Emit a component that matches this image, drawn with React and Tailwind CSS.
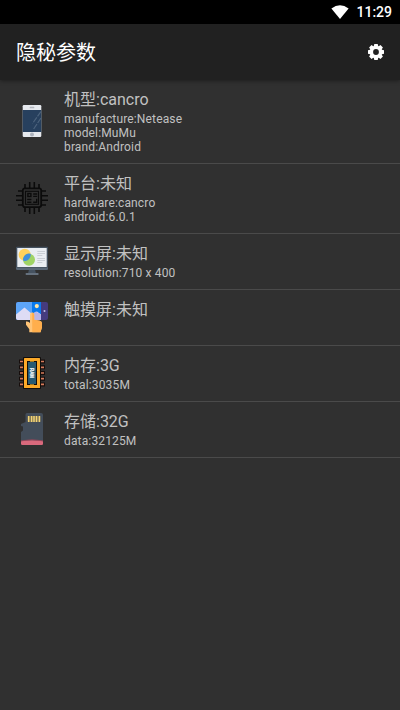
const PhoneIcon = () => (
  <svg viewBox="0 0 32 32" className="block size-8">
    <rect x="6.7" y="0" width="18.6" height="32" rx="1.2" fill="#e6e9ee" />
    <rect x="6.7" y="5" width="18.6" height="22" fill="#27405e" />
    <rect x="13.7" y="1.8" width="4.6" height="1.4" rx="0.5" fill="#b3b7bf" />
    <circle cx="16" cy="29.5" r="2" fill="#adb3bd" />
    <path d="M25 6.5 16.5 18.5M25 13 17.3 24.5" stroke="#4d637d" strokeWidth="1.2" strokeDasharray="6 1.2" />
  </svg>
);

const ChipIcon = () => (
  <svg viewBox="0 0 32 32" className="block size-8" fill="none" stroke="#0b0b0b">
    <path
      d="M9 2v4M13.7 0v6M18.3 0v6M23 2v4M9 26v4M13.7 26v6M18.3 26v6M23 26v4M2 9h4M0 13.7h6M0 18.3h6M2 23h4M26 9h4M26 13.7h6M26 18.3h6M26 23h4"
      strokeWidth="1.6"
    />
    <rect x="6.8" y="6.3" width="18.4" height="18.8" rx="2" strokeWidth="1.8" />
    <rect x="9.5" y="9.3" width="13" height="13" strokeWidth="1.1" />
    <rect x="11.9" y="11.5" width="3" height="3" strokeWidth="1.4" />
    <path d="M17.2 12h4M17.2 14.4h4M11.2 17.5h4.2M11.2 20.3h4.2M17.2 20.3h3.5v-3.6" strokeWidth="1.4" />
  </svg>
);

const MonitorIcon = () => (
  <svg viewBox="0 0 32 32" className="block size-8">
    <path d="M13 23.5h6l1 4h-8z" fill="#455260" />
    <rect x="9.7" y="27" width="12.8" height="2" rx="0.5" fill="#65717e" />
    <path d="M0 20.5h32v2.3q0 1.2-1.2 1.2H1.2Q0 24 0 22.8z" fill="#596776" />
    <rect x="0" y="0.7" width="32" height="21" rx="1" fill="#44515f" />
    <rect x="1.3" y="2" width="29.4" height="19" fill="#e9edf2" />
    <circle cx="8.7" cy="8.8" r="6.1" fill="#ffd15c" />
    <circle cx="13" cy="13.7" r="6" fill="#9fd365" />
    <path d="M7.1 12.4A6 6 0 0 1 14.6 7.8 6.1 6.1 0 0 1 7.3 14.8 6 6 0 0 1 7.1 12.4z" fill="#3f8fdb" />
    <path d="M21.3 5.5H29M21.3 7.5H29M21.3 9.5h5M21.3 12.5H29M21.3 14.5H29M21.3 16.5h5" stroke="#c9ced5" strokeWidth="1.1" />
  </svg>
);

const TouchIcon = () => (
  <svg viewBox="0 0 32 32" className="block size-8">
    <rect x="0" y="0" width="32" height="18" rx="2" fill="#453b7e" />
    <path d="M2 0h23v18H2q-2 0-2-2V2q0-2 2-2z" fill="#5da5f8" />
    <path d="M16 0h9v18h-9z" fill="#0879ed" />
    <path d="M0 12.5 8.5 5.5 16 12l5-2.5 4 3V18H2q-2 0-2-2z" fill="#dedcf5" />
    <path d="M16 12l4-2.5 5 3V18h-9z" fill="#b8b5e8" />
    <circle cx="20.8" cy="4.1" r="2.1" fill="#ffe5a6" />
    <circle cx="28.5" cy="9" r="1" fill="#c2bfe9" />
    <path d="M14 21V12.7a2.1 2.1 0 0 1 4.2 0v5.1l5.6 1q2.2.5 2.2 2.7v3.7l-1.5 5.1H13.3v-3L10 22.8v-3.2q2.7-.5 4 1.4z" fill="#ffc477" />
    <path d="M16.2 10.6a2.1 2.1 0 0 1 2 2.1v5.1l5.6 1q2.2.5 2.2 2.7v3.7l-1.5 5.1h-8.3z" fill="#ffae4c" />
  </svg>
);

const RamIcon = () => (
  <svg viewBox="0 0 32 32" className="block size-8">
    <path d="M3 4.5h26M3 10.3h26M3 16h26M3 21.7h26M3 27.4h26" stroke="#160d0b" strokeWidth="4" />
    <path d="M4 4.5h24M4 10.3h24M4 16h24M4 21.7h24M4 27.4h24" stroke="#d77d5d" strokeWidth="1.7" />
    <rect x="7" y="0" width="18" height="32" rx="1" fill="#110d0b" />
    <rect x="8" y="1" width="16" height="30" rx="0.5" fill="#fba928" />
    <rect x="11" y="4" width="10" height="24" fill="#110d0b" />
    <rect x="12" y="5" width="8" height="22" fill="#285a72" />
    <path d="M14 4.5h4M14 27.5h4" stroke="#9f761f" strokeWidth="1" />
    <text
      x="16"
      y="17.8"
      textAnchor="middle"
      transform="rotate(90 16 16)"
      fill="#edf4f7"
      stroke="#edf4f7"
      strokeWidth="0.3"
      fontFamily="Liberation Sans, sans-serif"
      fontSize="5"
      fontWeight="700"
      textLength="10"
      lengthAdjust="spacingAndGlyphs"
    >
      RAM
    </text>
  </svg>
);

const SdCardIcon = () => (
  <svg viewBox="0 0 32 32" className="block size-8">
    <path d="M11 0h14q2 0 2 2v29H5V19l2-1.5v-4L5 13v-2l4.5-2V1.5Q9.5 0 11 0z" fill="#434d5a" />
    <path d="M5 28.2Q16 26.2 27 28.2v2.6q0 1.2-1.2 1.2H6.2Q5 32 5 30.8z" fill="#d9697c" />
    <path d="M5 27.8Q16 25.8 27 27.8" fill="none" stroke="#a44458" strokeWidth="0.8" />
    <rect x="11.5" y="3" width="13" height="6" rx="0.8" fill="#746b51" />
    <path d="M12.7 3v6M15.6 3v6M18 3v6M20.5 3v6M23.4 3v6" stroke="#f2d477" strokeWidth="1.5" />
  </svg>
);

const items = [
  { icon: PhoneIcon, title: "机型:cancro", lines: ["manufacture:Netease", "model:MuMu", "brand:Android"], height: "h-[84px]", iconClass: "pb-px" },
  { icon: ChipIcon, title: "平台:未知", lines: ["hardware:cancro", "android:6.0.1"], height: "h-[70px]", iconClass: "pb-px" },
  { icon: MonitorIcon, title: "显示屏:未知", lines: ["resolution:710 x 400"], height: "h-14", iconClass: "pt-px" },
  { icon: TouchIcon, title: "触摸屏:未知", lines: [], height: "h-14", iconClass: "pt-px" },
  { icon: RamIcon, title: "内存:3G", lines: ["total:3035M"], height: "h-14", iconClass: "pb-px" },
  { icon: SdCardIcon, title: "存储:32G", lines: ["data:32125M"], height: "h-14", iconClass: "pb-px" },
];

const StatusBar = () => (
  <div className="flex h-6 items-center justify-end gap-[7px] bg-black pr-2">
    <svg viewBox="0 0 18 14" className="mb-px h-3.5 w-[18px]">
      <path d="M0.4 3.4Q9-3 17.6 3.4L9 14z" fill="#fff" />
    </svg>
    <span className="text-[14px] leading-6 font-medium text-white">11:29</span>
  </div>
);

const Header = () => (
  <header className="flex h-14 items-center justify-between bg-[#212121] px-4 shadow-[0_1px_4px_rgba(0,0,0,0.4)]">
    <h1 className="pt-0.5 text-[20px] leading-7 text-white">隐秘参数</h1>
    <svg viewBox="0 0 16 16" className="size-4">
      <path
        fillRule="evenodd"
        fill="#fff"
        d="M6.3 0h3.4l.5 2 .5.2L12.5 1.1 14.9 3.5 13.8 5.3l.2.5 2 .5v3.4l-2 .5-.2.5 1.1 1.8-2.4 2.4-1.8-1.1-.5.2-.5 2H6.3l-.5-2-.5-.2-1.8 1.1-2.4-2.4 1.1-1.8-.2-.5-2-.5V6.3l2-.5.2-.5L1.1 3.5l2.4-2.4 1.8 1.1.5-.2zM8 5.1a2.9 2.9 0 1 0 0 5.8 2.9 2.9 0 0 0 0-5.8z"
      />
    </svg>
  </header>
);

const InfoRow = ({ icon: Icon, title, lines, height, iconClass }) => (
  <li className={`flex border-b border-[#4a4a4a] px-4 ${height}`}>
    <div className={`flex h-full items-center ${iconClass}`}>
      <Icon />
    </div>
    <div className="ml-4 pt-2 text-[#c1c1c1]">
      <h2 className="text-[16px] leading-[23px]">{title}</h2>
      <div className="pt-px text-[12px] leading-[14px] tracking-[0.15px]">
        {lines.map((line) => (
          <p key={line}>{line}</p>
        ))}
      </div>
    </div>
  </li>
);

export default function App() {
  return (
    <div className="flex h-[710px] w-[400px] flex-col overflow-hidden bg-[#303030] font-[Roboto,'Noto_Sans_CJK_SC',sans-serif]">
      <StatusBar />
      <Header />
      <ul>
        {items.map((item) => (
          <InfoRow key={item.title} {...item} />
        ))}
      </ul>
    </div>
  );
}
